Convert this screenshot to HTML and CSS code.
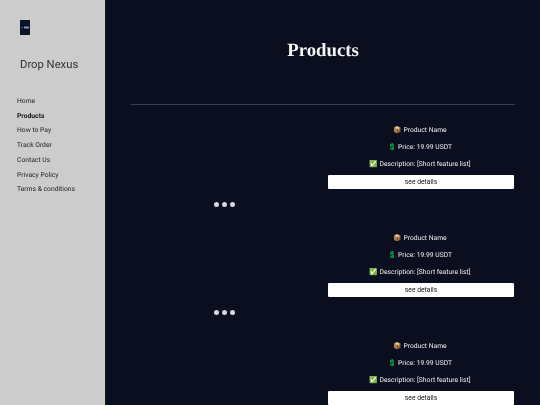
FILE: index.html
```html
<!DOCTYPE html>
<html lang="en">
<head>
<meta charset="utf-8">
<title>Products – Drop Nexus</title>
<link rel="stylesheet" href="styles.css">
</head>
<body>
<div class="page">
  <aside class="sidebar">
    <svg class="logo" viewBox="0 0 10 15" width="10" height="15"><rect width="10" height="15" fill="#0a1428"/><rect x="1" y="7" width="2" height="1" fill="#1c6a8c"/><rect x="4" y="6.5" width="5" height="2" fill="#8a93a3"/></svg>
    <div class="brand">Drop Nexus</div>
    <nav class="nav">
      <a>Home</a>
      <a class="active">Products</a>
      <a>How to Pay</a>
      <a>Track Order</a>
      <a>Contact Us</a>
      <a>Privacy Policy</a>
      <a>Terms &amp; conditions</a>
    </nav>
  </aside>
  <main class="main">
    <h1 class="title">Products</h1>
    <hr class="rule">
    <section class="product">
      <div class="gallery"><i></i><i></i><i></i></div>
      <div class="info">
        <p>📦 Product Name</p>
        <p>💲 Price: 19.99 USDT</p>
        <p>✅ Description: [Short feature list]</p>
        <button class="details">see details</button>
      </div>
    </section>
    <section class="product">
      <div class="gallery"><i></i><i></i><i></i></div>
      <div class="info">
        <p>📦 Product Name</p>
        <p>💲 Price: 19.99 USDT</p>
        <p>✅ Description: [Short feature list]</p>
        <button class="details">see details</button>
      </div>
    </section>
    <section class="product">
      <div class="gallery"><i></i><i></i><i></i></div>
      <div class="info">
        <p>📦 Product Name</p>
        <p>💲 Price: 19.99 USDT</p>
        <p>✅ Description: [Short feature list]</p>
        <button class="details">see details</button>
      </div>
    </section>
  </main>
</div>
</body>
</html>
```
FILE: styles.css
```css
* { box-sizing: border-box; }
html, body { margin: 0; height: 100%; overflow: hidden; }
body { font-family: Roboto, sans-serif; background: #0a0e1f; text-rendering: geometricPrecision; }
.page { display: flex; height: 405px; }
.sidebar { width: 106px; flex: none; background: #cccccc; border-right: 1px solid #1a1a1a; padding: 20px 0 0 17px; color: #333; }
.logo { display: block; margin-left: 3px; }
.brand { margin: 22px 0 0 3px; font-size: 11.25px; line-height: 16px; color: #333; will-change: transform; }
.nav { display: flex; flex-direction: column; margin-top: 21px; will-change: transform; }
.nav a { font-size: 6.75px; line-height: 14.7px; color: #222; }
.nav a.active { font-weight: 700; color: #111; }
.main { flex: 1; padding: 0 25px; color: #fff; overflow: hidden; }
.title { margin: 39px 0 0; font-family: "Liberation Serif", serif; font-size: 18.75px; line-height: 23px; font-weight: 700; text-align: center; color: #f5f5f5; will-change: transform; }
.rule { margin: 42px 0 0; border: 0; border-top: 1px solid #3a3d4d; }
.product { display: grid; grid-template-columns: 1fr 1fr; column-gap: 10px; height: 108px; padding-top: 20px; }
.gallery { display: flex; justify-content: center; align-items: center; gap: 2.6px; height: 14px; margin-top: 72px; align-self: start; }
.gallery i { width: 5px; height: 5px; border-radius: 50%; background: #d5d8e2; }
.info { display: flex; flex-direction: column; align-items: stretch; text-align: center; margin-right: 1px; will-change: transform; }
.info p { margin: 0 0 7px; padding-right: 2px; font-size: 6.75px; line-height: 10px; color: #f0f0f0; }
.details { height: 14px; padding: 0; border: 0; border-radius: 1px; background: #fff; color: #111; font-family: Roboto, sans-serif; font-size: 6.75px; margin-top: -1px; }
```
